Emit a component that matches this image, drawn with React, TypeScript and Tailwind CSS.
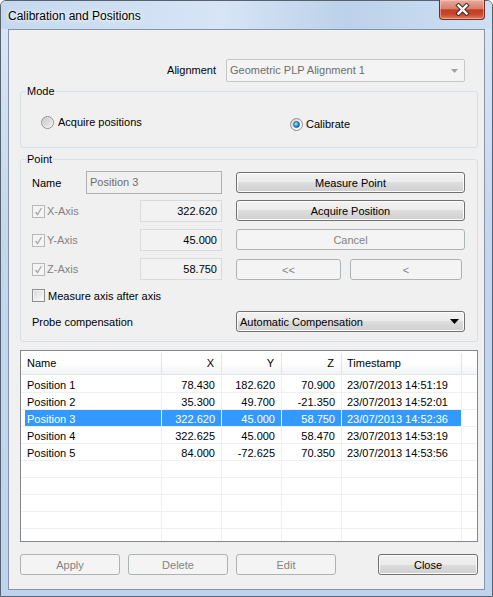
import clsx from 'clsx';

type Row = { name: string; x: string; y: string; z: string; ts: string };

const rows: Row[] = [
  { name: 'Position 1', x: '78.430', y: '182.620', z: '70.900', ts: '23/07/2013 14:51:19' },
  { name: 'Position 2', x: '35.300', y: '49.700', z: '-21.350', ts: '23/07/2013 14:52:01' },
  { name: 'Position 3', x: '322.620', y: '45.000', z: '58.750', ts: '23/07/2013 14:52:36' },
  { name: 'Position 4', x: '322.625', y: '45.000', z: '58.470', ts: '23/07/2013 14:53:19' },
  { name: 'Position 5', x: '84.000', y: '-72.625', z: '70.350', ts: '23/07/2013 14:53:56' },
];

const SELECTED = 2;

function Button({ label, disabled, className }: { label: string; disabled?: boolean; className?: string }) {
  return (
    <div
      className={clsx(
        'h-[21px] rounded-[3px] border flex items-center justify-center pt-[1px]',
        disabled
          ? 'border-[#adb2b5] bg-[#f4f4f4] text-[#838383]'
          : 'border-[#707070] bg-[linear-gradient(#f2f2f2,#ebebeb_50%,#dddddd_50%,#cfcfcf)] shadow-[inset_0_0_0_1px_#fcfcfc] text-black',
        className,
      )}
    >
      {label}
    </div>
  );
}

function Check({ checked, disabled }: { checked?: boolean; disabled?: boolean }) {
  return (
    <div
      className={clsx(
        'w-[13px] h-[13px] border flex items-center justify-center shrink-0',
        disabled
          ? 'border-[#b8b8b8] bg-[#f4f4f4]'
          : 'border-[#8e8f8f] bg-[linear-gradient(135deg,#d6d6d6,#ffffff)] shadow-[inset_0_0_0_1px_#f2f2f2]',
      )}
    >
      {checked && (
        <svg width="9" height="9" viewBox="0 0 9 9">
          <path d="M1.5 5 L3.5 7.5 L7.5 1" stroke="#a8a8a8" strokeWidth="1.3" fill="none" />
        </svg>
      )}
    </div>
  );
}

function Radio({ checked }: { checked?: boolean }) {
  return (
    <div className="w-[13px] h-[13px] rounded-full border border-[#8e8f8f] bg-[linear-gradient(135deg,#cfcfcf,#f4f4f4_60%,#ffffff)] flex items-center justify-center shrink-0">
      {checked ? (
        <div className="w-[7px] h-[7px] rounded-full border border-[#1b5a8c] bg-[radial-gradient(circle_at_35%_35%,#b7ecff,#2a92d6_55%,#0d4f88)]" />
      ) : (
        <div className="w-[9px] h-[9px] rounded-full bg-[linear-gradient(135deg,#c8c8c8,#ededed)]" />
      )}
    </div>
  );
}

function Group({ label, className, children }: { label: string; className?: string; children: React.ReactNode }) {
  return (
    <div className={clsx('relative w-[458px] border border-[#d5dfe5] rounded-[3px]', className)}>
      <span className="absolute left-[5px] -top-[8px] px-[1px] bg-[#f0f0f0] leading-[14px]">{label}</span>
      {children}
    </div>
  );
}

function ValueBox({ value }: { value: string }) {
  return (
    <div className="w-[82px] h-[22px] border border-[#dadada] bg-[#f2f2f2] flex items-center justify-end pr-[4px]">
      {value}
    </div>
  );
}

function AxisRow({ axis, value, children }: { axis: string; value: string; children: React.ReactNode }) {
  return (
    <div className="mt-[7px] flex items-start h-[22px]">
      <div className="w-[108px] h-[22px] flex items-center gap-[2px] text-[#838383]">
        <Check checked disabled />
        <span className="pt-[1px]">{axis}</span>
      </div>
      <ValueBox value={value} />
      <div className="ml-[14px] flex">{children}</div>
    </div>
  );
}

function ListRow({ row, selected }: { row?: Row; selected?: boolean }) {
  const sel = selected ? 'bg-[#3399ff] text-white' : '';
  return (
    <div className="flex h-[17px] border-b border-[#f0f0f0] leading-[16px]">
      <div className="w-[141px] pl-[4px] border-r border-[#f0f0f0] flex">
        <div className={clsx('flex-1 pl-[2px] pt-[1px]', sel)}>{row?.name}</div>
      </div>
      <div className={clsx('w-[60px] pr-[6px] pt-[1px] text-right border-r border-[#f0f0f0]', sel)}>{row?.x}</div>
      <div className={clsx('w-[60px] pr-[6px] pt-[1px] text-right border-r border-[#f0f0f0]', sel)}>{row?.y}</div>
      <div className={clsx('w-[60px] pr-[6px] pt-[1px] text-right border-r border-[#f0f0f0]', sel)}>{row?.z}</div>
      <div className={clsx('w-[120px] pl-[5px] pt-[1px] border-r border-[#f0f0f0]', sel)}>{row?.ts}</div>
      <div className="flex-1" />
    </div>
  );
}

export default function App() {
  return (
    <div className="w-[493px] h-[597px] font-['Liberation_Sans',Arial,sans-serif] text-[11px] text-black">
      <div className="w-[493px] h-[597px] border border-[#56626f] rounded-t-[6px] bg-[linear-gradient(180deg,#dbe7f6,#c3d7ef_40%,#bed4ee)] flex flex-col">
        {/* title bar */}
        <div className="h-[28px] flex pl-[7px] pr-[7px] bg-[linear-gradient(90deg,#c5d8ee,#d7e5f6_45%,#bcd1ea_70%,#cddff3)] rounded-t-[5px]">
          <div className="self-center pt-[1px] text-[12px] text-black [text-shadow:0_0_6px_#ffffff,0_0_3px_#ffffff]">
            Calibration and Positions
          </div>
          <div className="ml-auto -mt-[1px] w-[46px] h-[20px] rounded-b-[4px] border border-[#6b2f25] border-t-0 bg-[linear-gradient(#e9ab9c,#d7806c_45%,#c23d23_52%,#c8472b_75%,#e07c57)] shadow-[inset_0_0_0_1px_rgba(255,210,200,0.5)] flex items-center justify-center">
            <svg width="15" height="13" viewBox="0 0 15 13">
              <path d="M3.5 2.5 L11.5 10.5 M11.5 2.5 L3.5 10.5" stroke="#4a2a26" strokeWidth="4.4" strokeLinecap="square" />
              <path d="M3.5 2.5 L11.5 10.5 M11.5 2.5 L3.5 10.5" stroke="#ffffff" strokeWidth="2.4" strokeLinecap="square" />
            </svg>
          </div>
        </div>

        {/* client area */}
        <div className="mx-[7px] h-[561px] border border-[#8594a8] bg-[#f0f0f0] flex flex-col pl-[11px] pr-[7px]">
          {/* alignment */}
          <div className="mt-[29px] flex items-center h-[23px]">
            <div className="w-[196px] text-right">Alignment</div>
            <div className="ml-[10px] w-[239px] h-[23px] rounded-[2px] border border-[#c6c6c6] bg-[#f4f4f4] flex items-center pl-[3px] text-[#6d6d6d]">
              <span>Geometric PLP Alignment 1</span>
              <svg className="ml-auto mr-[6px]" width="7" height="4" viewBox="0 0 7 4">
                <path d="M0 0 H7 L3.5 4 Z" fill="#a0a0a0" />
              </svg>
            </div>
          </div>

          {/* mode */}
          <Group label="Mode" className="mt-[9px] h-[57px]">
            <div className="flex items-start pt-[22px] pl-[20px]">
              <div className="w-[249px] flex items-center gap-[4px]">
                <Radio />
                <span>Acquire positions</span>
              </div>
              <div className="mt-[2px] flex items-center gap-[3px]">
                <Radio checked />
                <span>Calibrate</span>
              </div>
            </div>
          </Group>

          {/* point */}
          <Group label="Point" className="mt-[11px] h-[183px]">
            <div className="flex flex-col pl-[11px] pt-[11px]">
              <div className="flex items-center h-[23px]">
                <div className="w-[54px] pt-[1px]">Name</div>
                <div className="w-[136px] h-[23px] border border-[#b0b0b0] bg-[#f0f0f0] flex items-center pl-[3px] text-[#6d6d6d]">
                  Position 3
                </div>
                <Button label="Measure Point" className="ml-[14px] w-[229px]" />
              </div>
              <div className="-mt-[1px]" />
              <AxisRow axis="X-Axis" value="322.620">
                <Button label="Acquire Position" className="w-[229px]" />
              </AxisRow>
              <AxisRow axis="Y-Axis" value="45.000">
                <Button label="Cancel" disabled className="w-[229px]" />
              </AxisRow>
              <AxisRow axis="Z-Axis" value="58.750">
                <Button label="<<" disabled className="w-[105px] mt-[1px]" />
                <Button label="<" disabled className="ml-[9px] w-[112px] mt-[1px]" />
              </AxisRow>
              <div className="mt-[9px] flex items-center h-[13px]">
                <Check />
                <span className="ml-[3px] pt-[1px]">Measure axis after axis</span>
              </div>
              <div className="mt-[9px] flex items-center h-[21px]">
                <div className="w-[204px] pt-[1px]">Probe compensation</div>
                <div className="w-[229px] h-[21px] rounded-[3px] border border-[#707070] bg-[linear-gradient(#f2f2f2,#ebebeb_50%,#dddddd_50%,#cfcfcf)] shadow-[inset_0_0_0_1px_#fcfcfc] flex items-center pl-[3px]">
                  <span className="pt-[1px]">Automatic Compensation</span>
                  <svg className="ml-auto mr-[5px]" width="9" height="5" viewBox="0 0 9 5">
                    <path d="M0 0 H9 L4.5 5 Z" fill="#000000" />
                  </svg>
                </div>
              </div>
            </div>
          </Group>

          {/* list */}
          <div className="mt-[8px] w-[458px] h-[192px] border border-[#828790] bg-white overflow-hidden">
            <div className="flex h-[24px] border-b border-[#e5e5e5] bg-[linear-gradient(#ffffff,#ffffff_50%,#f3f4f6)] pt-[2px] leading-[21px]">
              <div className="w-[141px] pl-[6px] border-r border-[#e3e3e3]">Name</div>
              <div className="w-[60px] pr-[7px] text-right border-r border-[#e3e3e3]">X</div>
              <div className="w-[60px] pr-[7px] text-right border-r border-[#e3e3e3]">Y</div>
              <div className="w-[60px] pr-[7px] text-right border-r border-[#e3e3e3]">Z</div>
              <div className="w-[120px] pl-[5px] border-r border-[#e3e3e3]">Timestamp</div>
              <div className="flex-1" />
            </div>
            <div className="pt-[1px]">
              {rows.map((r, i) => (
                <ListRow key={r.name} row={r} selected={i === SELECTED} />
              ))}
              {[0, 1, 2, 3, 4].map((i) => (
                <ListRow key={i} />
              ))}
            </div>
          </div>

          {/* bottom buttons */}
          <div className="mt-[12px] flex w-[458px]">
            <Button label="Apply" disabled className="w-[100px]" />
            <Button label="Delete" disabled className="ml-[8px] w-[100px]" />
            <Button label="Edit" disabled className="ml-[8px] w-[100px]" />
            <Button label="Close" className="ml-auto w-[100px]" />
          </div>
        </div>
      </div>
    </div>
  );
}
